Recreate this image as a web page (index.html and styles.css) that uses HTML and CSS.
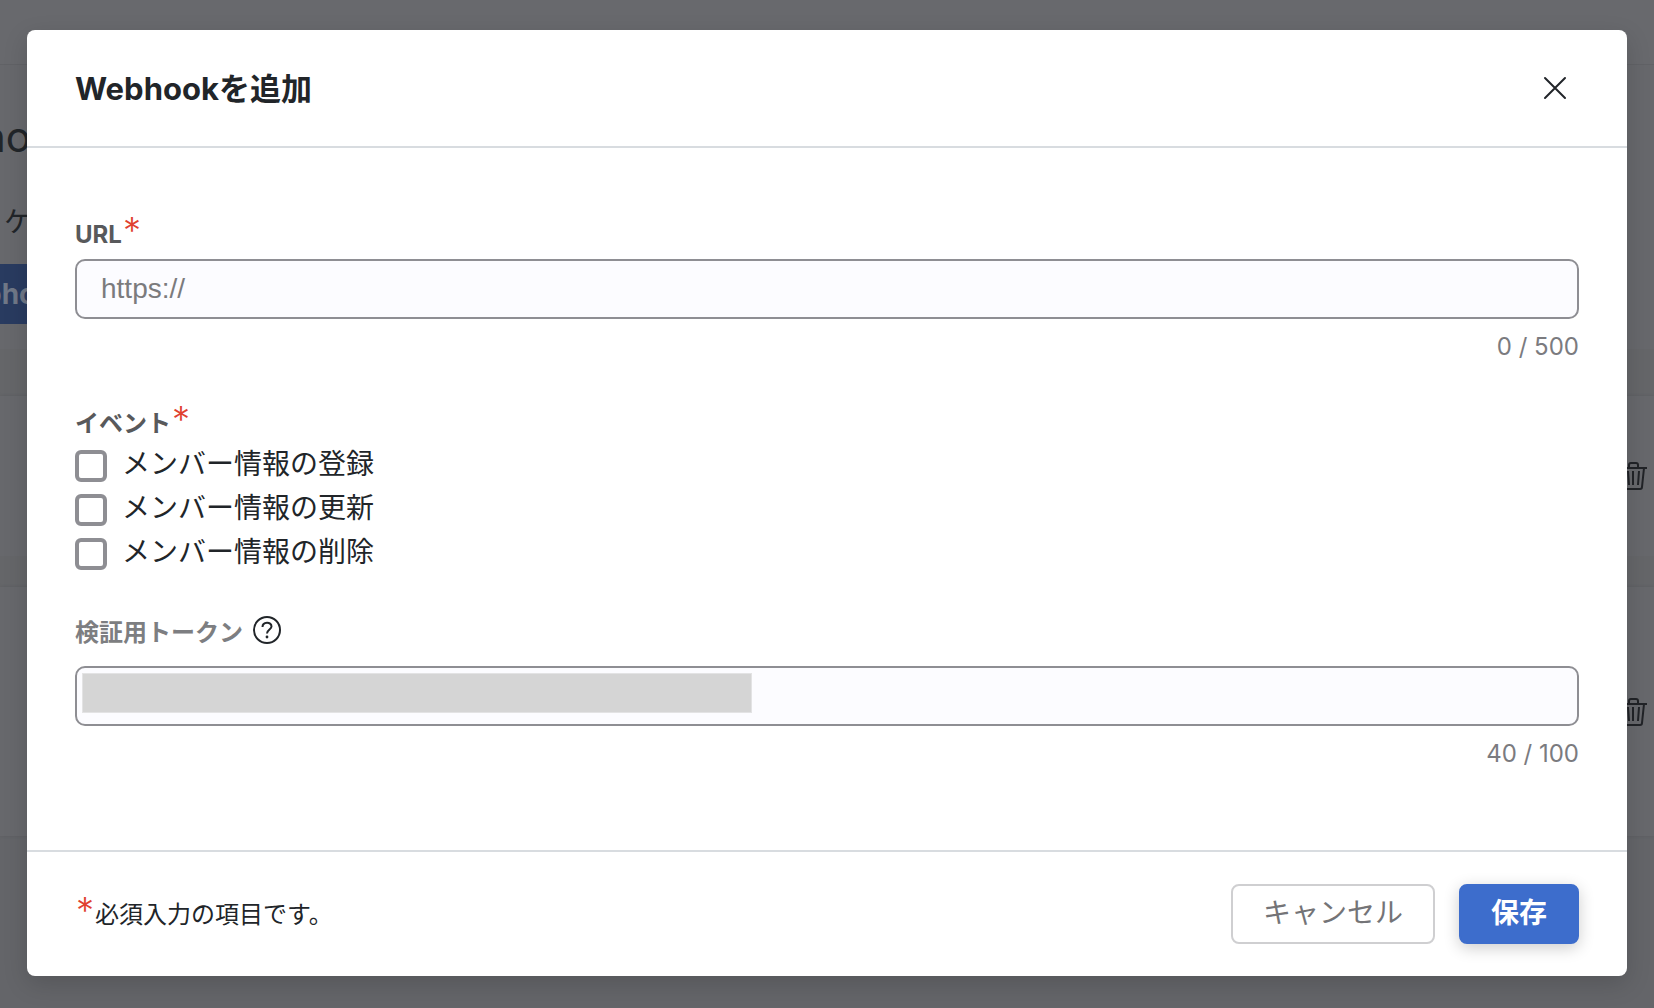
FILE: index.html
```html
<!DOCTYPE html>
<html lang="ja">
   <head>
      <meta charset="UTF-8">
      <meta name="viewport" content="width=device-width, initial-scale=1.0">
      <title>Webhookを追加</title>
      <link rel="stylesheet" href="styles.css">
   </head>

   <body>
      <!---------------PAGE BEHIND-------------->
      <div class="page" aria-hidden="true">
         <div class="page-bar"></div>
         <div class="page-intro">
            <h1 class="page-title">ho</h1>
            <p class="page-text">ケ</p>
            <button type="button" class="page-button" tabindex="-1">pho</button>
         </div>
         <div class="page-gap"></div>
         <div class="page-row row-first">
            <svg class="trash" viewBox="0 0 28 30" fill="none" stroke="currentColor" stroke-width="2">
               <path d="M1 7H28M10 7V4Q10 2 12 2H17Q19 2 19 4V7M4 7L6 26Q6 28 8 28H21Q23 28 23 26L25 7M9 10L10 24M14 10V24M20 10L19 24"/>
            </svg>
         </div>
         <div class="page-gap gap-small"></div>
         <div class="page-row row-second">
            <svg class="trash" viewBox="0 0 28 30" fill="none" stroke="currentColor" stroke-width="2">
               <path d="M1 7H28M10 7V4Q10 2 12 2H17Q19 2 19 4V7M4 7L6 26Q6 28 8 28H21Q23 28 23 26L25 7M9 10L10 24M14 10V24M20 10L19 24"/>
            </svg>
         </div>
      </div>

      <!------------------MODAL---------------->
      <div class="overlay">
         <form class="modal" role="dialog" aria-labelledby="modal-title">
            <header class="modal-header">
               <h2 class="modal-title" id="modal-title">Webhookを追加</h2>
               <button type="button" class="close" aria-label="閉じる">
                  <svg width="24" height="24" viewBox="0 0 24 24" fill="none" stroke="currentColor" stroke-width="2" stroke-linecap="round">
                     <path d="M2 2L22 22M22 2L2 22"/>
                  </svg>
               </button>
            </header>

            <div class="modal-body">
               <div class="field">
                  <label class="label" for="url">URL<span class="required">*</span></label>
                  <input type="text" class="input" id="url" placeholder="https://" maxlength="500">
                  <p class="counter">0 / 500</p>
               </div>

               <fieldset class="field">
                  <legend class="label label-group">イベント<span class="required">*</span></legend>
                  <div class="checks">
                     <label class="check"><input type="checkbox" class="checkbox">メンバー情報の登録</label>
                     <label class="check"><input type="checkbox" class="checkbox">メンバー情報の更新</label>
                     <label class="check"><input type="checkbox" class="checkbox">メンバー情報の削除</label>
                  </div>
               </fieldset>

               <div class="field">
                  <div class="label-row">
                     <label class="label label-light" for="token">検証用トークン</label>
                     <svg class="help" width="30" height="30" viewBox="0 0 30 30" fill="none" stroke="currentColor" stroke-width="2">
                        <circle cx="15" cy="15" r="13"/>
                        <path d="M10.500 12C10.500 6.300 19.500 6.300 19.500 11.500C19.500 14.500 15 14.500 15 18.500"/>
                        <circle cx="15" cy="22" r="1.400" fill="currentColor" stroke="none"/>
                     </svg>
                  </div>
                  <div class="masked">
                     <input type="text" class="input" id="token" maxlength="100">
                     <span class="mask"></span>
                  </div>
                  <p class="counter">40 / 100</p>
               </div>
            </div>

            <footer class="modal-footer">
               <p class="note"><span class="required">*</span>必須入力の項目です。</p>
               <div class="actions">
                  <button type="button" class="button">キャンセル</button>
                  <button type="submit" class="button button-primary">保存</button>
               </div>
            </footer>
         </form>
      </div>
   </body>
</html>
```

FILE: styles.css
```css
*{
   box-sizing: border-box;
   margin: 0;
   padding: 0;
}

body{
   min-height: 100vh;
   overflow: hidden;
   background: #646569;
   color: #212529;
   font-family: Inter, "Noto Sans CJK JP", sans-serif;
   font-size: 28px;
}

/* page behind */
.page-bar{
   height: 65px;
   background: #68696d;
   border-bottom: 1px solid #616266;
}

.page-intro{
   height: 284px;
   padding-top: 48px;
   background: #67686c;
}

.page-title{
   margin-left: -19px;
   font-size: 42px;
   font-weight: 400;
   line-height: 48px;
}

.page-text{
   margin: 40px 0 21px 4px;
   line-height: 42px;
}

.page-button{
   width: 200px;
   height: 60px;
   margin-left: -16px;
   border: none;
   background: #293b60;
   color: #707887;
   font-family: inherit;
   font-size: 28px;
   font-weight: 700;
   text-align: left;
}

.page-gap{
   height: 47px;
   background: #656669;
}

.gap-small{
   height: 31px;
}

.page-row{
   display: flex;
   justify-content: flex-end;
   align-items: center;
   padding-right: 7px;
   background: #67686c;
   box-shadow: 0 0 3px #5b5c60;
}

.row-first{
   height: 160px;
}

.row-second{
   height: 249px;
}

.trash{
   width: 28px;
   height: 30px;
   color: #212327;
}

/* modal */
.overlay{
   position: absolute;
   top: 0;
   left: 0;
   width: 100%;
   padding: 30px 27px;
}

.modal{
   border-radius: 8px;
   background: #fff;
   box-shadow: 0 8px 24px rgba(0, 0, 0, 0.15);
}

.modal-header{
   display: flex;
   justify-content: space-between;
   align-items: center;
   height: 118px;
   padding: 0 48px;
   border-bottom: 2px solid #d8dce0;
}

.modal-title{
   padding-top: 2px;
   font-size: 31px;
   font-weight: 700;
   line-height: 48px;
}

.close{
   display: flex;
   justify-content: center;
   align-items: center;
   width: 48px;
   height: 48px;
   border: none;
   background: none;
   color: #212529;
}

.modal-body{
   display: flex;
   flex-direction: column;
   gap: 43px;
   padding: 69px 48px 80px;
}

.field{
   border: none;
}

.label{
   display: block;
   height: 36px;
   margin-bottom: 6px;
   color: #58595b;
   font-size: 24px;
   font-weight: 700;
   line-height: 36px;
}

.label-group{
   margin-bottom: 8px;
}

.label-row{
   display: flex;
   align-items: flex-start;
   gap: 9px;
   height: 36px;
   margin-top: 45px;
   margin-bottom: 15px;
}

.field:last-child{
   margin-top: -43px;
}

.label-light{
   margin: 0;
   color: #7d7e81;
}

.help{
   color: #212529;
}

.required{
   margin: 0 1px;
   color: #e0412f;
   font-size: 36px;
   font-weight: 300;
   line-height: 24px;
}

.input{
   display: block;
   width: 100%;
   height: 60px;
   padding: 0 24px;
   border: 2px solid #8e8e93;
   border-radius: 10px;
   background: #fcfcff;
   color: #212529;
   font-family: "Liberation Sans", sans-serif;
   font-size: 28px;
}

.input::placeholder{
   color: #7b7b7d;
}

.counter{
   margin-top: 12px;
   color: #7b7b7f;
   font-size: 24px;
   line-height: 32px;
   text-align: right;
}

.checks{
   display: flex;
   flex-direction: column;
   gap: 12px;
}

.check{
   display: flex;
   align-items: flex-start;
   gap: 15px;
   height: 32px;
   line-height: 28px;
}

.checkbox{
   width: 32px;
   height: 32px;
   border: 4px solid #8e8e93;
   border-radius: 6px;
   background: #fff;
   appearance: none;
}

.checkbox:checked{
   background: #3d6dcc;
}

.masked{
   position: relative;
}

.mask{
   position: absolute;
   top: 7px;
   left: 7px;
   width: 670px;
   max-width: 90%;
   height: 40px;
   border: 1px solid #e3e3e4;
   background: #d5d5d5;
}

.modal-footer{
   display: flex;
   justify-content: space-between;
   align-items: center;
   padding: 32px 48px;
   border-top: 2px solid #d8dce0;
}

.note{
   padding-top: 2px;
   font-size: 24px;
   line-height: 36px;
}

.actions{
   display: flex;
   gap: 24px;
}

.button{
   height: 60px;
   padding: 0 30px 6px;
   border: 2px solid #cfcfd1;
   border-radius: 8px;
   background: #fff;
   color: #747477;
   font-family: inherit;
   font-size: 28px;
}

.button-primary{
   border-color: #3d6dcc;
   background: #3d6dcc;
   color: #fff;
   font-weight: 700;
   box-shadow: 0 4px 16px rgba(0, 0, 0, 0.2);
}
```
